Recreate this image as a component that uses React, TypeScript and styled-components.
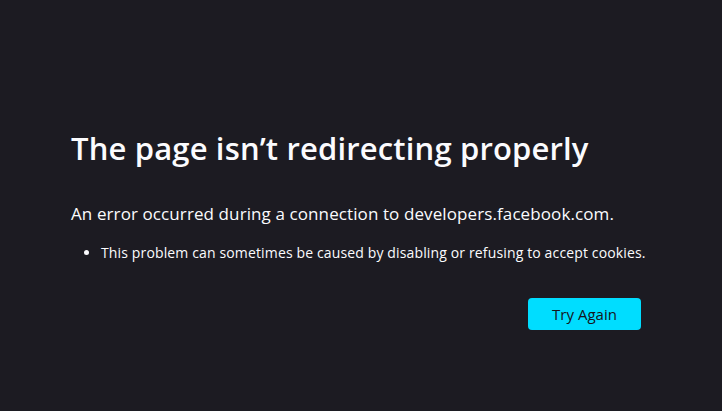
import React from "react";
import styled, { createGlobalStyle } from "styled-components";

const Global = createGlobalStyle`
  html, body { margin: 0; padding: 0; background: #1c1b22; }
  body { font-family: "Open Sans", "Noto Sans", sans-serif; color: #fbfbfe; }
`;

const Page = styled.div`
  width: 722px;
  height: 411px;
  display: flex;
  align-items: flex-start;
  box-sizing: border-box;
  padding: 126px 0 0 71px;
`;

const Container = styled.div`
  width: 570px;
  display: flex;
  flex-direction: column;
`;

const Title = styled.h1`
  margin: 0;
  font-size: 31px;
  font-weight: 600;
  line-height: 44px;
  letter-spacing: 0.15px;
  white-space: nowrap;
`;

const Desc = styled.p`
  margin: 32px 0 0 0;
  font-size: 17px;
  line-height: 24px;
  letter-spacing: 0.1px;
  white-space: nowrap;
`;

const List = styled.ul`
  margin: 17px 0 0 0;
  padding-left: 30px;
  font-size: 14px;
  line-height: 20px;
  letter-spacing: 0.14px;
  white-space: nowrap;
`;

const Actions = styled.div`
  display: flex;
  justify-content: flex-end;
  margin-top: 35px;
`;

const Button = styled.button`
  width: 113px;
  height: 32px;
  border: none;
  border-radius: 4px;
  background: #00ddff;
  color: #15141a;
  font-family: inherit;
  font-size: 15px;
  padding: 0;
`;

export default function App() {
  return (
    <>
      <Global />
      <Page>
        <Container>
          <Title>The page isn’t redirecting properly</Title>
          <Desc>An error occurred during a connection to developers.facebook.com.</Desc>
          <List>
            <li>This problem can sometimes be caused by disabling or refusing to accept cookies.</li>
          </List>
          <Actions>
            <Button>Try Again</Button>
          </Actions>
        </Container>
      </Page>
    </>
  );
}
